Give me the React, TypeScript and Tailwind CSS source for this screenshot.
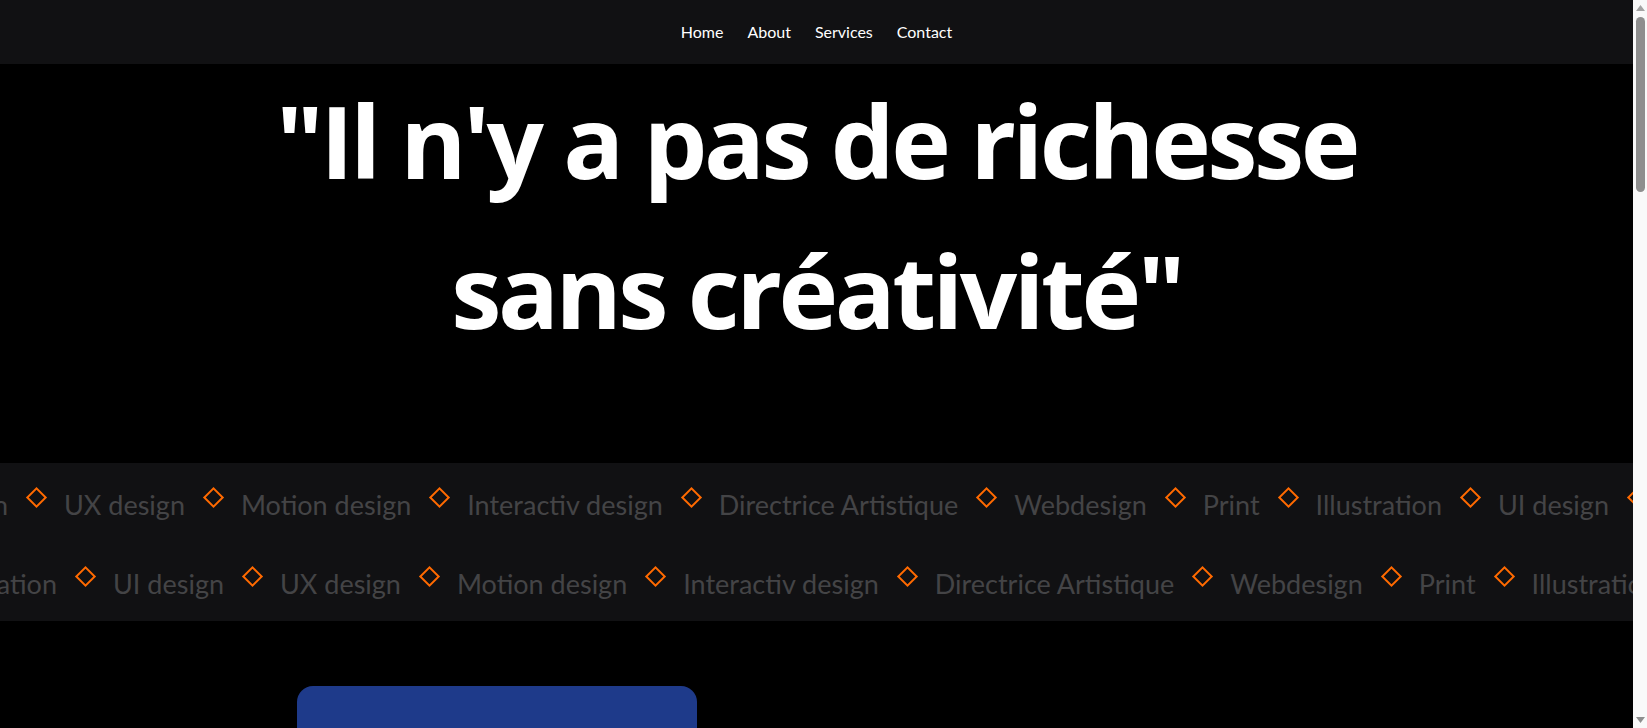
import React from 'react'

const skills = [
  'UI design',
  'UX design',
  'Motion design',
  'Interactiv design',
  'Directrice Artistique',
  'Webdesign',
  'Print',
  'Illustration',
]

const Diamond = () => (
  <span className="ml-[21px] mr-[20px] inline-block h-[15px] w-[15px] shrink-0 -translate-y-[7px] rotate-45 border-2 border-[#ff6a00]" />
)

// first item is pushed off the left edge, ending at `lead` px
const MarqueeRow = ({ start, lead }: { start: number; lead: string }) => {
  const rest = [...skills.slice(start + 1), ...skills, ...skills.slice(0, start)]
  return (
    <div className="flex items-center overflow-hidden whitespace-nowrap text-[27px] leading-[40px] text-[#444446]">
      <div className={`flex shrink-0 justify-end ${lead}`}>
        <span className="shrink-0">{skills[start]}</span>
      </div>
      {rest.map((s, i) => (
        <React.Fragment key={i}>
          <Diamond />
          <span className="shrink-0">{s}</span>
        </React.Fragment>
      ))}
    </div>
  )
}

const Scrollbar = () => (
  <aside className="sticky top-0 flex h-screen w-[14px] shrink-0 flex-col items-center bg-[#f9f9f9]">
    <svg width="9" height="6" viewBox="0 0 9 6" className="mt-[5px]">
      <path d="M4.5 0 9 6H0z" fill="#a3a3a3" />
    </svg>
    <div className="mt-[6px] h-[175px] w-[9px] rounded-full bg-[#8e8e8e]" />
    <div className="flex-1" />
    <svg width="9" height="6" viewBox="0 0 9 6" className="mb-[5px]">
      <path d="M0 0h9L4.5 6z" fill="#8e8e8e" />
    </svg>
  </aside>
)

export default function App() {
  return (
    <div className="flex bg-black font-['Lato','Open_Sans',sans-serif] text-white">
      <main className="min-h-[2900px] min-w-0 flex-1">
        <nav className="flex h-16 items-center justify-center gap-6 bg-[#111113] text-base">
          <a href="#">Home</a>
          <a href="#">About</a>
          <a href="#">Services</a>
          <a href="#">Contact</a>
        </nav>

        <section className="flex h-[399px] justify-center pt-[1px]">
          <h1 className="text-center font-['Open_Sans',sans-serif] text-[101px] leading-[150px] font-bold tracking-[-3.5px]">
            "Il n'y a pas de richesse
            <br />
            sans créativité"
          </h1>
        </section>

        <section className="flex h-[158px] flex-col justify-center gap-[39px] bg-[#111113] pt-[4px]">
          <MarqueeRow start={0} lead="w-[8px]" />
          <MarqueeRow start={7} lead="w-[57px]" />
        </section>

        <section className="pt-[65px] pl-[297px]">
          <div className="h-[360px] w-[400px] rounded-2xl bg-[#1e3a8a]" />
        </section>
      </main>
      <Scrollbar />
    </div>
  )
}
